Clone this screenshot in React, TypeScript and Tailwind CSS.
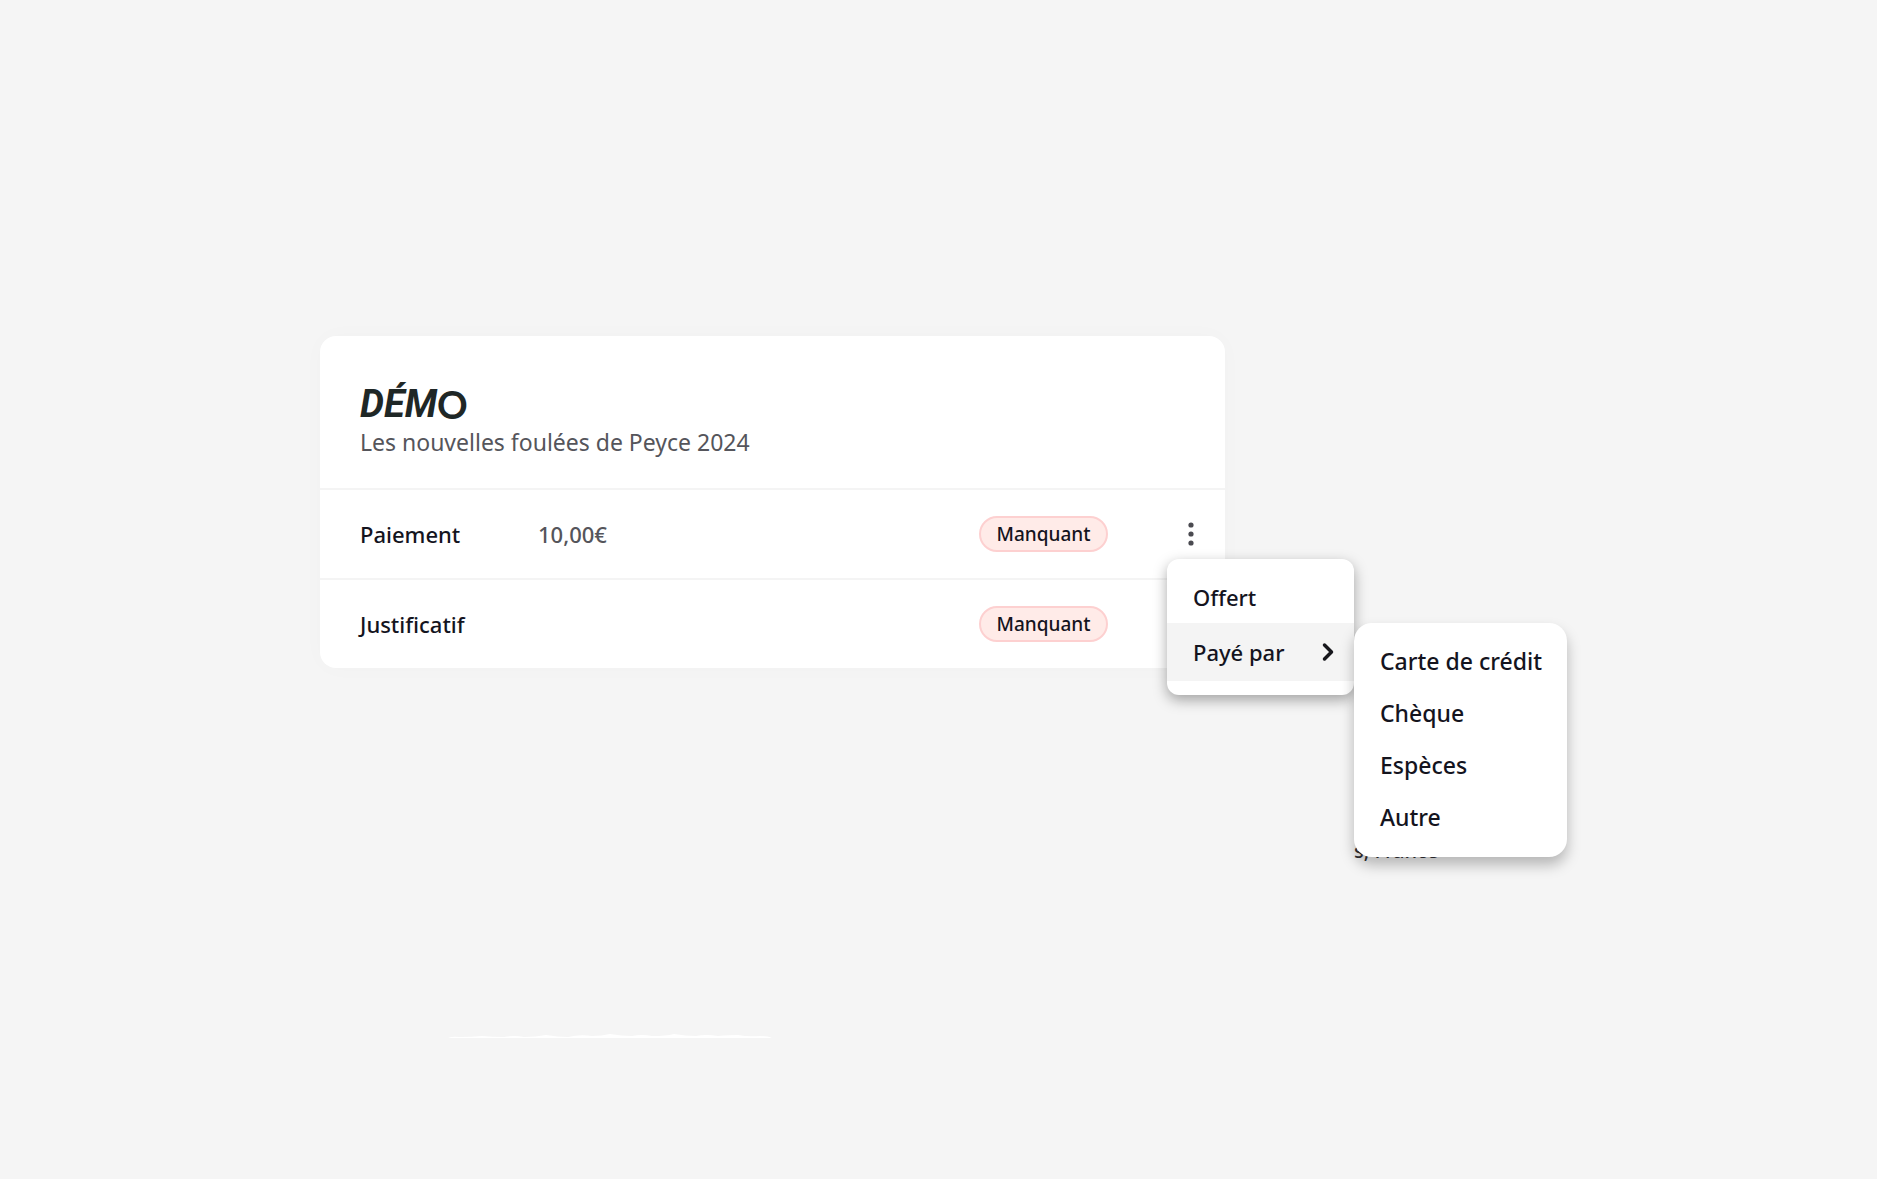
import { ChevronRight } from "lucide-react";

const rows = [
  { label: "Paiement", value: "10,00€", status: "Manquant", menu: true },
  { label: "Justificatif", value: "", status: "Manquant", menu: false },
];

const paymentMethods = ["Carte de crédit", "Chèque", "Espèces", "Autre"];

function PaymentMenu() {
  return (
    <ul className="absolute left-full top-0 w-[213px] rounded-[18px] bg-white pb-[14px] pt-3 text-[23px] shadow-[0_8px_14px_rgba(0,0,0,0.26)]">
      {paymentMethods.map((method) => (
        <li key={method}>
          <button
            type="button"
            className="flex h-[52px] w-full items-center whitespace-nowrap px-[26px] text-left"
          >
            {method}
          </button>
        </li>
      ))}
    </ul>
  );
}

function ActionsMenu() {
  return (
    <div className="absolute left-0 top-full mt-px w-[187px] rounded-xl bg-white pb-[14px] shadow-[0_5px_14px_rgba(0,0,0,0.34)]">
      <button
        type="button"
        className="flex h-16 w-full items-center px-[26px] pt-3 text-left"
      >
        Offert
      </button>
      <div className="relative">
        <button
          type="button"
          className="flex h-[58px] w-full items-center justify-between bg-[#f4f4f4] pl-[26px] pr-3 text-left"
        >
          Payé par
          <ChevronRight className="h-7 w-7 text-[#17171c]" strokeWidth={3} />
        </button>
        {/* Address line partly hidden by the submenu */}
        <span className="absolute left-full top-[214px] whitespace-nowrap text-xl text-[#2f2f34]">
          s, France
        </span>
        <PaymentMenu />
      </div>
    </div>
  );
}

export default function App() {
  return (
    <main className="min-h-screen bg-[#f5f5f5] px-80 pt-84 font-['Noto_Sans',sans-serif] text-[22px] text-[#14141e]">
      <section className="w-full max-w-[905px] rounded-2xl bg-white shadow-[0_0_24px_rgba(0,0,0,0.02)]">
        <header className="px-10 pb-8 pt-11">
          <h1 className="flex h-12 items-center text-[38px] leading-none text-[#1f2726]">
            <span className="font-[Roboto,sans-serif] font-bold italic">DÉM</span>
            <span className="font-[Lato,sans-serif] font-bold">O</span>
          </h1>
          <p className="text-[23px] leading-7 text-[#55555b]">
            Les nouvelles foulées de Peyce 2024
          </p>
        </header>

        {rows.map((row) => (
          <div
            key={row.label}
            className="flex h-[90px] items-center border-t-2 border-[#f4f4f4] pl-10 pr-[10px] font-medium"
          >
            <span className="w-[178px]">{row.label}</span>
            <span className="flex-1 text-[#55555b]">{row.value}</span>
            <span className="flex h-9 w-[129px] items-center justify-center rounded-full border-2 border-[#fdd0d0] bg-[#ffebe8] text-[19px]">
              {row.status}
            </span>
            <div className="relative ml-[59px] h-12 w-12">
              {row.menu && (
                <>
                  <button
                    type="button"
                    aria-label="Actions"
                    className="flex h-12 w-12 items-center justify-center"
                  >
                    <svg viewBox="0 0 6 24" className="h-6 w-[6px] fill-[#4a4a50]">
                      <circle cx="3" cy="3" r="2.6" />
                      <circle cx="3" cy="12" r="2.6" />
                      <circle cx="3" cy="21" r="2.6" />
                    </svg>
                  </button>
                  <ActionsMenu />
                </>
              )}
            </div>
          </div>
        ))}
      </section>

      <svg
        viewBox="0 0 324 4"
        className="ml-32 mt-[366px] h-1 w-[324px] fill-white"
        aria-hidden="true"
      >
        <path d="M0 4Q4 2 12 3Q24 3 34 2Q44 3 56 3Q66 1 76 3Q88 3 98 1Q110 3 120 3Q132 0 144 2Q154 2 162 0Q174 2 184 2Q194 0 204 2Q218 2 226 0Q238 2 248 2Q258 0 270 2Q282 1 290 1Q300 3 312 2Q320 2 324 4Z" />
      </svg>
    </main>
  );
}
